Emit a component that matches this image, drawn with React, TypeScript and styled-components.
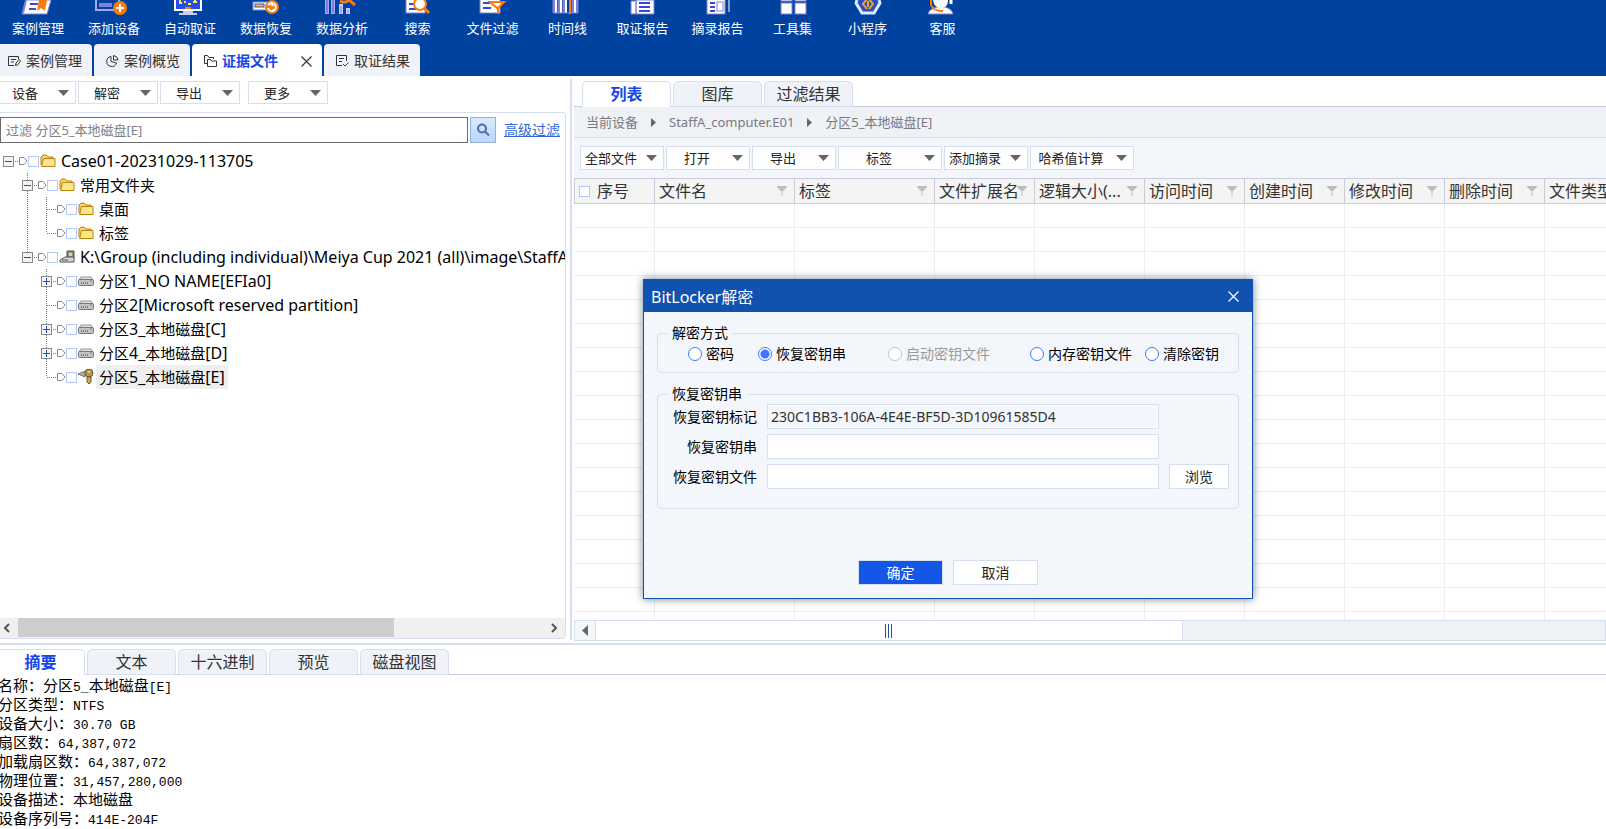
import React from "react";
import styled, { createGlobalStyle, css } from "styled-components";

const uiFont = `"Noto Sans", "Noto Sans CJK SC", sans-serif`;
const line = "#d5dff0";
const strongLine = "#c9cbdc";
const panel = "#f3f6fb";
const accent = "#1446e8";

const GlobalStyle = createGlobalStyle`
  *, *::before, *::after { box-sizing: border-box; }
  body { margin: 0; background: #fff; color: #333; font: 13px/20px ${uiFont}; overflow: hidden; }
  button, input { font: inherit; color: inherit; margin: 0; border-radius: 0; }
  button { padding: 0; border: 0; background: none; white-space: nowrap; }
`;

const Page = styled.div`
  position: relative;
  display: flex;
  flex-direction: column;
  height: 100vh;
`;

/* ---------- header ---------- */

const Header = styled.header`
  flex: none;
  background: #00429f;
`;

const Ribbon = styled.nav`
  display: grid;
  grid-template-columns: repeat(5, 76px) repeat(8, 75px);
  height: 44px;
`;

const RibbonButton = styled.button`
  display: flex;
  flex-direction: column;
  align-items: center;
  gap: 2px;
  height: 44px;
  color: #fff;
`;

const MainTabs = styled.div`
  display: flex;
  gap: 2px;
  height: 32px;
  margin-left: -4px;
`;

const MainTab = styled.div<{ $active?: boolean }>`
  display: flex;
  align-items: center;
  gap: 23px;
  padding: 2px 10px 0 12px;
  border-radius: 4px 4px 0 0;
  background: ${(p) => (p.$active ? "#fff" : "#eff2f8")};
`;

const MainTabButton = styled.button<{ $active?: boolean }>`
  display: flex;
  align-items: center;
  gap: 5px;
  height: 30px;
  font-size: 14px;
  font-weight: ${(p) => (p.$active ? 700 : 400)};
  color: ${(p) => (p.$active ? accent : "#333")};
  svg { color: #333; }
`;

const IconButton = styled.button`
  display: flex;
  align-items: center;
  justify-content: center;
`;

/* ---------- shared ---------- */

const MenuButton = styled.button<{ $width: number; $tall?: boolean }>`
  display: flex;
  align-items: center;
  flex: none;
  width: ${(p) => p.$width}px;
  height: ${(p) => (p.$tall ? 24 : 23)}px;
  padding-right: 6px;
  border: 1px solid ${line};
  background: #fff;
  color: #222;
  span { flex: 1; text-align: center; padding-right: 5px; }
`;

const Tabs = styled.div<{ $indent: number }>`
  display: flex;
  gap: 2px;
  flex: none;
  height: 26px;
  padding-left: ${(p) => p.$indent}px;
  box-shadow: inset 0 -1px ${strongLine};
`;

const Tab = styled.button<{ $active?: boolean }>`
  flex: none;
  width: 89px;
  height: 26px;
  border: 1px solid ${line};
  border-bottom-color: ${(p) => (p.$active ? "#fff" : line)};
  border-radius: 5px 5px 0 0;
  background: ${(p) => (p.$active ? "#fff" : "#eff2f8")};
  font-size: 16px;
  font-weight: ${(p) => (p.$active ? 700 : 400)};
  color: ${(p) => (p.$active ? accent : "#333")};
`;

const Check = styled.input.attrs({ type: "checkbox" })`
  appearance: none;
  flex: none;
  width: 11px;
  height: 11px;
  border: 1px solid #b3c8ff;
  background: #fff;
`;

/* ---------- workspace ---------- */

const Workspace = styled.main`
  display: flex;
  flex: 1;
  min-height: 0;
`;

const Left = styled.section`
  display: flex;
  flex-direction: column;
  flex: none;
  width: 566px;
  padding-bottom: 4px;
`;

const LeftTools = styled.div`
  display: flex;
  gap: 2px;
  flex: none;
  height: 36px;
  padding-top: 5px;
  margin-left: -4px;
  button:last-child { margin-left: 6px; }
`;

const TreePanel = styled.div`
  display: flex;
  flex-direction: column;
  flex: 1;
  min-height: 0;
  border: solid ${line};
  border-width: 1px 1px 1px 0;
  border-radius: 0 4px 4px 0;
`;

const FilterBar = styled.form`
  display: flex;
  align-items: center;
  flex: none;
  padding: 4px 5px 4px 0;
`;

const FilterInput = styled.input`
  flex: 1;
  min-width: 0;
  height: 26px;
  padding: 0 5px;
  border: 1px solid #6c6c6c;
  font-size: 13px;
  color: #777;
  &::placeholder { color: #808080; }
`;

const SearchButton = styled.button`
  display: flex;
  align-items: center;
  justify-content: center;
  width: 26px;
  height: 26px;
  margin: 0 8px 0 2px;
  border: 1px solid #92b3dd;
  background: linear-gradient(#dce9fc, #bcd5fa);
`;

const AdvancedLink = styled.a`
  font-size: 14px;
  color: #3468d8;
  text-decoration: underline;
`;

const Tree = styled.ul`
  flex: 1;
  min-height: 0;
  margin: 0;
  padding: 2px 0 0;
  list-style: none;
  overflow: hidden;
`;

const TreeRow = styled.li`
  display: flex;
  align-items: center;
  height: 24px;
  svg { flex: none; }
`;

const TreeLabel = styled.label`
  display: flex;
  align-items: center;
  gap: 1px;
  font-size: 15px;
  line-height: 24px;
  color: #000;
  white-space: nowrap;
`;

const NodeText = styled.span<{ $selected?: boolean }>`
  height: 24px;
  margin-left: 1px;
  padding: 0 3px;
  background: ${(p) => (p.$selected ? "#efefef" : "none")};
`;

const NodeLatin = styled.span`
  font-size: 16px;
`;

const TreeScroll = styled.div`
  display: flex;
  flex: none;
  height: 20px;
  background: #f0f0f0;
  button { width: 18px; }
`;

const TreeTrack = styled.div`
  flex: 1;
  &::before { content: ""; display: block; width: 71%; height: 19px; background: #cdcdcd; }
`;

const Splitter = styled.div`
  flex: none;
  width: 2px;
  margin: 3px 2px 3px 4px;
  background: ${line};
`;

const Right = styled.section`
  display: flex;
  flex-direction: column;
  flex: 1;
  min-width: 0;
  padding: 5px 0 2px;
`;

const Crumbs = styled.nav`
  display: flex;
  align-items: center;
  gap: 13px;
  flex: none;
  height: 31px;
  padding-left: 12px;
  border-bottom: 1px solid ${line};
  background: #eef1f6;
  color: #7a7a7e;
  a { color: inherit; text-decoration: none; }
`;

const ListTools = styled.div`
  display: flex;
  gap: 2px;
  flex: none;
  height: 40px;
  padding: 8px 6px;
  background: ${panel};
`;

const TableArea = styled.div`
  flex: 1;
  min-height: 0;
  overflow: hidden;
`;

const FileTable = styled.table`
  width: 100%;
  min-width: 1071px;
  table-layout: fixed;
  border-collapse: separate;
  border-spacing: 0;
  th {
    height: 26px;
    padding: 0 4px;
    border: solid ${strongLine};
    border-width: 1px 1px 1px 0;
    background: #f4f4f4;
    font-size: 16px;
    font-weight: 400;
    text-align: left;
  }
  th:first-child { border-left-width: 1px; }
  td { height: 24px; padding: 0; border: solid #eeeef0; border-width: 0 1px 1px 0; }
`;

const HeadCell = styled.div`
  display: flex;
  align-items: center;
  justify-content: space-between;
  height: 24px;
  white-space: nowrap;
  button { width: 10px; margin-right: 3px; flex: none; }
  span { flex: 1; width: 0; overflow: visible; }
`;

const HeadCheck = styled.label`
  display: flex;
  align-items: center;
  gap: 7px;
`;

const TableScroll = styled.div`
  display: flex;
  flex: none;
  height: 21px;
  border: 1px solid ${line};
  background: #eef2f7;
`;

const ScrollStep = styled(IconButton)`
  width: 21px;
  border-right: 1px solid ${line};
  background: ${panel};
`;

const TableThumb = styled.div`
  display: flex;
  align-items: center;
  justify-content: center;
  width: 57%;
  border-right: 1px solid ${line};
  background: #fff;
`;

/* ---------- details ---------- */

const Details = styled.section`
  flex: none;
  height: 186px;
  padding-top: 4px;
  border-top: 2px solid ${line};
  overflow: hidden;
`;

const DetailTabs = styled(Tabs)`
  margin-left: -4px;
`;

const Facts = styled.dl`
  margin: 0 0 0 -2px;
  font: 15px/19px "Noto Sans CJK SC", sans-serif;
  color: #000;
  div { display: flex; height: 19px; }
  dt, dd { margin: 0; white-space: pre; }
`;

const HalfWidth = styled.span`
  font-family: "Liberation Mono", monospace;
  font-size: 13px;
`;

/* ---------- dialog ---------- */

const Dialog = styled.div`
  position: absolute;
  left: 643px;
  top: 279px;
  width: 610px;
  border: 1px solid #1152af;
  background: ${panel};
  box-shadow: 0 0 8px rgba(20, 50, 90, 0.6);
  font-size: 14px;
  color: #000;
`;

const DialogTitle = styled.div`
  display: flex;
  align-items: center;
  justify-content: space-between;
  height: 32px;
  padding: 1px 13px 0 7px;
  background: #1152af;
  color: #fff;
  h2 { margin: 0; font-size: 16px; font-weight: 400; }
`;

const DialogBody = styled.form`
  display: flex;
  flex-direction: column;
  gap: 11px;
  padding: 11px 13px 13px;
`;

const Group = styled.fieldset`
  min-width: 0;
  margin: 0;
  padding: 0 9px;
  border: 1px solid ${line};
  border-radius: 4px;
  legend { padding: 0 5px; line-height: 20px; }
`;

const Methods = styled.div`
  display: grid;
  grid-template-columns: 70px 130px 142px 115px auto;
  padding: 1px 0 8px 21px;
`;

const Method = styled.label<{ $disabled?: boolean }>`
  display: flex;
  align-items: center;
  gap: 4px;
  white-space: nowrap;
  color: ${(p) => (p.$disabled ? "#9a9a9a" : "#000")};
`;

const Radio = styled.input.attrs({ type: "radio" })`
  appearance: none;
  flex: none;
  width: 14px;
  height: 14px;
  border: 1px solid #3d78ff;
  border-radius: 50%;
  background: #fff;
  &:checked { background: radial-gradient(circle, #3d78ff 4px, #fff 5px); }
  &:disabled { border-color: #c4c4c4; }
`;

const Fields = styled.div`
  display: grid;
  grid-template-columns: 90px minmax(0, 1fr) 60px;
  gap: 5px 10px;
  align-items: center;
  padding-bottom: 19px;
  label { text-align: right; line-height: 25px; }
`;

const field = css`
  height: 25px;
  border: 1px solid ${line};
  background: #fff;
`;

const TextField = styled.input`
  ${field}
  grid-column: 2;
  width: 100%;
  padding: 0 3px;
  font-size: 14px;
  color: #333;
  outline: 0;
  &:read-only { background: ${panel}; box-shadow: inset 0 0 0 1px #fff; }
`;

const PlainButton = styled.button<{ $primary?: boolean; $wide?: boolean }>`
  ${field}
  width: ${(p) => (p.$wide ? 85 : 60)}px;
  background: ${(p) => (p.$primary ? "#1456e6" : "#fff")};
  color: ${(p) => (p.$primary ? "#fff" : "#222")};
`;

const Actions = styled.div`
  display: flex;
  justify-content: center;
  gap: 10px;
  padding-top: 40px;
`;

/* ---------- drawings ---------- */

const P = "#7d82d8";
const O = "#f97b0a";

const ribbonArt: Record<string, React.ReactNode> = {
  案例管理: (
    <>
      <path d="M8 0H33L29 14H4Z" fill="#fff" stroke={P} strokeWidth="1" />
      <path d="M8 0L5 13" stroke={P} strokeWidth="2" />
      <path d="M12 4H20M11 9H18" stroke="#3a48d0" strokeWidth="2" />
      <path d="M21 0H29L27 11L23 8L19 11Z" fill={O} />
    </>
  ),
  添加设备: (
    <>
      <path d="M2 0V10H22" fill="none" stroke="#a4a8ee" strokeWidth="2" />
      <rect x="5" y="3" width="13" height="4" fill={P} />
      <path d="M25 0V3" stroke="#a4a8ee" strokeWidth="2" />
      <circle cx="26" cy="8" r="7" fill={O} />
      <path d="M22 8H30M26 4V12" stroke="#fff" strokeWidth="2" />
    </>
  ),
  自动取证: (
    <>
      <path d="M5 0V10H31V0" fill="#284ce8" stroke="#fff" strokeWidth="2" />
      <path d="M9 3H12M14 2H16M18 4H21M23 2H27M10 0V3M25 0V3" stroke="#ffec3d" strokeWidth="2" />
      <path d="M15 8H21" stroke={O} strokeWidth="2" />
      <path d="M13 12H23M9 14H27" stroke="#c8ccff" strokeWidth="2" />
    </>
  ),
  数据恢复: (
    <>
      <rect x="7" y="2" width="18" height="8" fill="#fff" stroke={P} strokeWidth="1" />
      <rect x="9" y="4" width="9" height="3" fill="#e8c41c" stroke="#3a48d0" />
      <circle cx="26" cy="7" r="7" fill={O} />
      <path d="M22 8A4 4 0 1 0 25 3M22 5L25 3L27 6M25 3" fill="none" stroke="#fff" strokeWidth="2" />
    </>
  ),
  数据分析: (
    <>
      <path d="M5 0V14M11 0V14" stroke="#a4a8ee" strokeWidth="4" />
      <path d="M5 0V13M11 0V13" stroke={P} strokeWidth="2" />
      <path d="M19 4V14M26 8V14" stroke="#c4c8ff" strokeWidth="4" />
      <path d="M19 6V13M26 10V13" stroke={P} strokeWidth="1" />
      <path d="M18 1Q23 4 27 0L33 5" fill="none" stroke={O} strokeWidth="3" />
    </>
  ),
  搜索: (
    <>
      <rect x="8" y="-2" width="19" height="15" fill="#fff" stroke={P} strokeWidth="1" />
      <path d="M11 4H16M11 9H18" stroke="#3a48d0" strokeWidth="2" />
      <circle cx="22" cy="4" r="6" fill="#fff" stroke={O} strokeWidth="2" />
      <path d="M26 8L31 13" stroke={O} strokeWidth="3" />
    </>
  ),
  文件过滤: (
    <>
      <rect x="7" y="-2" width="20" height="15" fill="#fff" stroke={P} strokeWidth="1" />
      <path d="M10 3H17M10 8H18" stroke="#3a48d0" strokeWidth="2" />
      <path d="M17 2H31L25 8V14V8L24 8Z" fill="#fff" stroke={O} strokeWidth="2" />
    </>
  ),
  时间线: (
    <>
      <path d="M6 0V13M11 0V13M16 0V13M25 0V13M29 0V13" stroke={P} strokeWidth="3" />
      <path d="M8 0V13M13 0V13M18 0V13M27 0V13" stroke="#fff" strokeWidth="2" />
      <path d="M5 13H30" stroke={P} strokeWidth="1" />
      <path d="M22 0V14" stroke={O} strokeWidth="2" />
    </>
  ),
  取证报告: (
    <>
      <path d="M12 0H31V14H8V1H12Z" fill="#fff" stroke={P} strokeWidth="1" />
      <path d="M13 0V14" stroke="#3a48d0" strokeWidth="1" />
      <path d="M16 3H27M16 7H27M16 11H27" stroke="#3a48d0" strokeWidth="2" />
    </>
  ),
  摘录报告: (
    <>
      <rect x="9" y="-2" width="18" height="16" fill="#fff" stroke={P} strokeWidth="1" />
      <path d="M12 3H17M12 7H17M12 11H17" stroke="#3a48d0" strokeWidth="2" />
      <rect x="19" y="2" width="6" height="9" fill="#fff" stroke={P} />
      <path d="M31 0V12" stroke="#fff" strokeWidth="1" />
    </>
  ),
  工具集: (
    <g fill="#fff" stroke={P}>
      <rect x="8" y="-8" width="11" height="9" />
      <rect x="22" y="-8" width="11" height="9" />
      <rect x="8" y="3" width="11" height="11" />
      <rect x="22" y="3" width="11" height="11" />
    </g>
  ),
  小程序: (
    <>
      <path d="M9 0L8 3L14 13H26L32 3L31 0" fill="#284ccc" stroke="#dcecff" strokeWidth="3" />
      <path d="M19 -1L15 4L19 9M21 -1L25 4L21 9M20 1V7" fill="none" stroke="#f2a51a" strokeWidth="2" />
    </>
  ),
  客服: (
    <>
      <path d="M5 14Q6 9 14 7H22Q29 9 30 14Z" fill="#fff" stroke={P} strokeWidth="1" />
      <path d="M10 0Q11 8 18 8Q25 8 25 0Z" fill="#fff" />
      <path d="M28 0V4" stroke="#fff" strokeWidth="3" />
      <path d="M8 0V5Q10 10 17 11H20" fill="none" stroke={O} strokeWidth="2" />
    </>
  ),
};

const Caret = () => (
  <svg width="11" height="6" viewBox="0 0 11 6" aria-hidden="true">
    <path d="M0 0H11L5.500 6Z" fill="#666" />
  </svg>
);

const CrumbArrow = () => (
  <svg width="5" height="9" viewBox="0 0 5 9" aria-hidden="true">
    <path d="M0 0L5 4.500L0 9Z" fill="#666" />
  </svg>
);

const Cross = () => (
  <svg width="11" height="11" viewBox="0 0 11 11" aria-hidden="true">
    <path d="M.5 .5L10.500 10.500M10.500 .5L.5 10.500" stroke="currentColor" strokeWidth="1.200" />
  </svg>
);

const Funnel = () => (
  <svg width="10" height="10" viewBox="0 0 10 10" aria-hidden="true">
    <path d="M0 0H10V1L6 5H5.500V10H4.500V5H4L0 1Z" fill="#bdbdbd" />
  </svg>
);

const Magnifier = () => (
  <svg width="14" height="14" viewBox="0 0 14 14" aria-hidden="true" fill="none" stroke="#4670ae" strokeWidth="2">
    <circle cx="6" cy="5.500" r="4" />
    <path d="M9 8.500L13 12.500" />
  </svg>
);

const tabArt = {
  edit: <path d="M6 10.500H.5V1.500H10.500V4M3 4.500H8M3 7H6M7.500 10.500L8 8L11 4.500L12.500 6L9.500 10Z" />,
  pie: <path d="M5 1.500A5 5 0 1 0 10.500 8L5 6.500ZM7.500 .5V5H12A5 5 0 0 0 7.500 .5Z" />,
  folders: <path d="M3 8.500H.5V.5H3.500L5 2.500H9.500V4M3.500 11.500V4.500H6.500L7.500 6H12.500V11.500Z" />,
  result: <path d="M6 10.500H.5V.5H10.500V6M3 3.500H8M3 6.500H6M7 9L9 11L12.500 7.500" />,
};

const TabIcon = ({ name }: { name: keyof typeof tabArt }) => (
  <svg width="13" height="12" viewBox="0 0 13 12" fill="none" stroke="currentColor" aria-hidden="true">
    {tabArt[name]}
  </svg>
);

type NodeIcon = "folder" | "image" | "disk" | "locked";

const nodeArt: Record<NodeIcon, React.ReactNode> = {
  folder: (
    <>
      <path d="M1 12V4L3 2H6L8 4H13V6" fill="#f5d263" stroke="#b8860b" />
      <path d="M1.500 13.500L3.500 5.500H15V13.500Z" fill="#fce48c" stroke="#b8860b" />
    </>
  ),
  image: (
    <>
      <path d="M8 2H15V9H8Z" fill="#8e9487" stroke="#4d4d4d" />
      <path d="M10 4H13V7H10Z" fill="#d9df83" />
      <path d="M1 11L6 8H15V13H1Z" fill="#d6d6d6" stroke="#555" />
      <path d="M3 11H9" stroke="#555" />
    </>
  ),
  disk: (
    <>
      <path d="M3 4H13L15 7H1Z" fill="#dedede" stroke="#999" strokeWidth="1" />
      <rect x=".5" y="6.500" width="15" height="6" rx="1" fill="#c4c4c4" stroke="#777" />
      <path d="M3 10H10" stroke="#333" strokeWidth="1" strokeDasharray="1 1" />
      <path d="M12 8H14" stroke="#3c9a3c" />
    </>
  ),
  locked: (
    <>
      <path d="M0 5L7 2V8Z" fill="#aaa" stroke="#777" />
      <circle cx="11" cy="4" r="4" fill="#b8954a" stroke="#75591d" />
      <path d="M9 8H13V13L11 15L9 13Z" fill="#cda959" stroke="#75591d" />
      <path d="M10 3H12" stroke="#fff" />
    </>
  ),
};

type Branch = "root" | "mid" | "last";

interface Node {
  text: string;
  level: number;
  icon: NodeIcon;
  branch: Branch;
  toggle?: "+" | "-";
  through?: boolean;
  selected?: boolean;
}

const nodes: Node[] = [
  { text: "Case01-20231029-113705", level: 0, icon: "folder", branch: "root", toggle: "-" },
  { text: "常用文件夹", level: 1, icon: "folder", branch: "mid", toggle: "-" },
  { text: "桌面", level: 2, icon: "folder", branch: "mid", through: true },
  { text: "标签", level: 2, icon: "folder", branch: "last", through: true },
  {
    text: "K:\\Group (including individual)\\Meiya Cup 2021 (all)\\image\\StaffA_computer.E01",
    level: 1, icon: "image", branch: "last", toggle: "-",
  },
  { text: "分区1_NO NAME[EFIa0]", level: 2, icon: "disk", branch: "mid", toggle: "+" },
  { text: "分区2[Microsoft reserved partition]", level: 2, icon: "disk", branch: "mid" },
  { text: "分区3_本地磁盘[C]", level: 2, icon: "disk", branch: "mid", toggle: "+" },
  { text: "分区4_本地磁盘[D]", level: 2, icon: "disk", branch: "mid", toggle: "+" },
  { text: "分区5_本地磁盘[E]", level: 2, icon: "locked", branch: "last", selected: true },
];

const Gutter = ({ node }: { node: Node }) => {
  const x = node.level * 19;
  const c = x + 8.5;
  return (
    <svg width={x + 28} height="24" viewBox={`0 0 ${x + 28} 24`} aria-hidden="true" shapeRendering="crispEdges">
      <g stroke="#777" strokeDasharray="1 1">
        {node.branch !== "root" && <path d={`M${c} 0V${node.branch === "last" ? 12 : 24}`} />}
        {node.through && <path d="M27.500 0V24" />}
        <path d={`M${c} 12.500H${x + 19}`} />
      </g>
      <path d={`M${x + 19.5} 8.500H${x + 24}L${x + 27} 12L${x + 24} 15.500H${x + 19.5}Z`} fill="#fff" stroke="#888" shapeRendering="auto" />
      {node.toggle && (
        <>
          <rect x={x + 3.5} y="7.500" width="10" height="10" fill="#f3f3f3" stroke="#8a8a8a" />
          <path d={`M${x + 5} 12.500H${x + 12}${node.toggle === "+" ? `M${c} 9V16` : ""}`} stroke="#2a4fa8" />
        </>
      )}
    </svg>
  );
};

const columns: [string, number | undefined][] = [
  ["文件名", 140], ["标签", 140], ["文件扩展名", 100], ["逻辑大小(...", 110], ["访问时间", 100],
  ["创建时间", 100], ["修改时间", 100], ["删除时间", 100], ["文件类型", undefined],
];

const listTools: [string, number][] = [
  ["全部文件", 84], ["打开", 84], ["导出", 84], ["标签", 104], ["添加摘录", 84], ["哈希值计算", 104],
];

const facts: [string, string][] = [
  ["名称", "分区5_本地磁盘[E]"],
  ["分区类型", "NTFS"],
  ["设备大小", "30.70 GB"],
  ["扇区数", "64,387,072"],
  ["加载扇区数", "64,387,072"],
  ["物理位置", "31,457,280,000"],
  ["设备描述", "本地磁盘"],
  ["设备序列号", "414E-204F"],
];

/* Sets the Latin runs of a label in their own face or size beside the full-width characters. */
const Mixed = ({ text, latin: Latin }: { text: string; latin: React.ElementType }) => (
  <>
    {text.split(/([\x20-\x7e]+)/).map((part, i) => (i % 2 ? <Latin key={i}>{part}</Latin> : part))}
  </>
);

const methods: { text: string; checked?: boolean; disabled?: boolean }[] = [
  { text: "密码" },
  { text: "恢复密钥串", checked: true },
  { text: "启动密钥文件", disabled: true },
  { text: "内存密钥文件" },
  { text: "清除密钥" },
];

export default function App() {
  return (
    <Page>
      <GlobalStyle />
      <Header>
        <Ribbon>
          {Object.entries(ribbonArt).map(([name, art]) => (
            <RibbonButton key={name}>
              <svg width="40" height="16" viewBox="0 0 40 16" aria-hidden="true">{art}</svg>
              {name}
            </RibbonButton>
          ))}
        </Ribbon>
        <MainTabs>
          <MainTab><MainTabButton><TabIcon name="edit" />案例管理</MainTabButton></MainTab>
          <MainTab><MainTabButton><TabIcon name="pie" />案例概览</MainTabButton></MainTab>
          <MainTab $active>
            <MainTabButton $active><TabIcon name="folders" />证据文件</MainTabButton>
            <IconButton aria-label="关闭"><Cross /></IconButton>
          </MainTab>
          <MainTab><MainTabButton><TabIcon name="result" />取证结果</MainTabButton></MainTab>
        </MainTabs>
      </Header>

      <Workspace>
        <Left>
          <LeftTools>
            {["设备", "解密", "导出", "更多"].map((t) => (
              <MenuButton key={t} $width={80} aria-haspopup="menu"><span>{t}</span><Caret /></MenuButton>
            ))}
          </LeftTools>
          <TreePanel>
            <FilterBar onSubmit={(e) => e.preventDefault()}>
              <FilterInput aria-label="过滤" placeholder="过滤 分区5_本地磁盘[E]" />
              <SearchButton aria-label="搜索"><Magnifier /></SearchButton>
              <AdvancedLink href="#filter">高级过滤</AdvancedLink>
            </FilterBar>
            <Tree>
              {nodes.map((n) => (
                <TreeRow key={n.text}>
                  <Gutter node={n} />
                  <TreeLabel>
                    <Check />
                    <svg width="16" height="16" viewBox="0 0 16 16" aria-hidden="true">{nodeArt[n.icon]}</svg>
                    <NodeText $selected={n.selected}><Mixed text={n.text} latin={NodeLatin} /></NodeText>
                  </TreeLabel>
                </TreeRow>
              ))}
            </Tree>
            <TreeScroll>
              <IconButton aria-label="向左">
                <svg width="12" height="10" viewBox="0 0 12 10" fill="none" stroke="#555" strokeWidth="2"><path d="M6 1L2 5L6 9" /></svg>
              </IconButton>
              <TreeTrack />
              <IconButton aria-label="向右">
                <svg width="12" height="10" viewBox="0 0 12 10" fill="none" stroke="#555" strokeWidth="2"><path d="M2 1L6 5L2 9" /></svg>
              </IconButton>
            </TreeScroll>
          </TreePanel>
        </Left>

        <Splitter />

        <Right>
          <Tabs $indent={8}>
            <Tab $active>列表</Tab>
            <Tab>图库</Tab>
            <Tab>过滤结果</Tab>
          </Tabs>
          <Crumbs>
            <a href="#device">当前设备</a><CrumbArrow />
            <a href="#image">StaffA_computer.E01</a><CrumbArrow />
            <a href="#volume">分区5_本地磁盘[E]</a>
          </Crumbs>
          <ListTools>
            {listTools.map(([t, w]) => (
              <MenuButton key={t} $width={w} $tall aria-haspopup="menu"><span>{t}</span><Caret /></MenuButton>
            ))}
          </ListTools>
          <TableArea>
            <FileTable>
              <colgroup>
                <col width={81} />
                {columns.map(([name, w]) => <col key={name} width={w} />)}
              </colgroup>
              <thead>
                <tr>
                  <th scope="col"><HeadCheck><Check />序号</HeadCheck></th>
                  {columns.map(([name]) => (
                    <th key={name} scope="col">
                      <HeadCell>
                        <span>{name}</span>
                        <IconButton aria-label={`筛选${name}`}><Funnel /></IconButton>
                      </HeadCell>
                    </th>
                  ))}
                </tr>
              </thead>
              <tbody>
                {Array.from({ length: 18 }, (_, r) => (
                  <tr key={r}>{Array.from({ length: columns.length + 1 }, (_, c) => <td key={c} />)}</tr>
                ))}
              </tbody>
            </FileTable>
          </TableArea>
          <TableScroll>
            <ScrollStep aria-label="向左">
              <svg width="6" height="11" viewBox="0 0 6 11"><path d="M6 0V11L0 5.500Z" fill="#666" /></svg>
            </ScrollStep>
            <TableThumb>
              <svg width="8" height="14" viewBox="0 0 8 14"><path d="M.5 0V14M3.500 0V14M6.500 0V14" stroke="#1a55a8" /></svg>
            </TableThumb>
          </TableScroll>
        </Right>
      </Workspace>

      <Details>
        <DetailTabs $indent={0}>
          <Tab $active>摘要</Tab>
          <Tab>文本</Tab>
          <Tab>十六进制</Tab>
          <Tab>预览</Tab>
          <Tab>磁盘视图</Tab>
        </DetailTabs>
        <Facts>
          {facts.map(([k, v]) => (
            <div key={k}><dt>{k}：</dt><dd><Mixed text={v} latin={HalfWidth} /></dd></div>
          ))}
        </Facts>
      </Details>

      <Dialog role="dialog" aria-labelledby="dialog-title">
        <DialogTitle>
          <h2 id="dialog-title">BitLocker解密</h2>
          <IconButton aria-label="关闭"><Cross /></IconButton>
        </DialogTitle>
        <DialogBody onSubmit={(e) => e.preventDefault()}>
          <Group>
            <legend>解密方式</legend>
            <Methods>
              {methods.map((m) => (
                <Method key={m.text} $disabled={m.disabled}>
                  <Radio name="method" defaultChecked={m.checked} disabled={m.disabled} />
                  {m.text}
                </Method>
              ))}
            </Methods>
          </Group>
          <Group>
            <legend>恢复密钥串</legend>
            <Fields>
              <label htmlFor="key-id">恢复密钥标记</label>
              <TextField id="key-id" readOnly value="230C1BB3-106A-4E4E-BF5D-3D10961585D4" />
              <span />
              <label htmlFor="key-string">恢复密钥串</label>
              <TextField id="key-string" />
              <span />
              <label htmlFor="key-file">恢复密钥文件</label>
              <TextField id="key-file" />
              <PlainButton type="button">浏览</PlainButton>
            </Fields>
          </Group>
          <Actions>
            <PlainButton $primary $wide>确定</PlainButton>
            <PlainButton $wide type="button">取消</PlainButton>
          </Actions>
        </DialogBody>
      </Dialog>
    </Page>
  );
}
